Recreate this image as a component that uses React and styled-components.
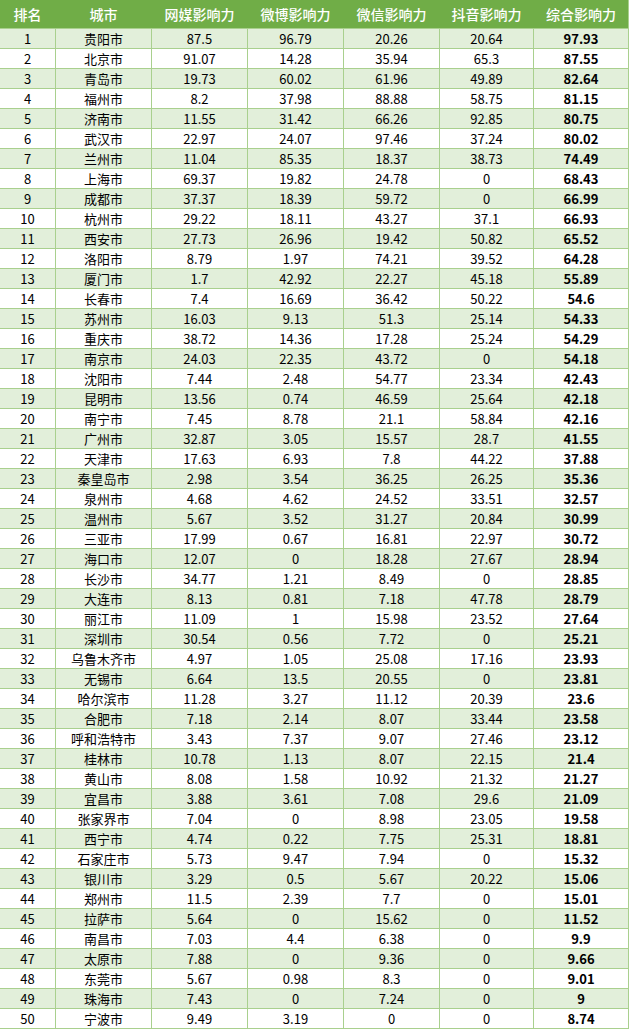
import React from 'react'
import styled, { createGlobalStyle } from 'styled-components';

const raw = `1 贵阳市 87.5 96.79 20.26 20.64 97.93
2 北京市 91.07 14.28 35.94 65.3 87.55
3 青岛市 19.73 60.02 61.96 49.89 82.64
4 福州市 8.2 37.98 88.88 58.75 81.15
5 济南市 11.55 31.42 66.26 92.85 80.75
6 武汉市 22.97 24.07 97.46 37.24 80.02
7 兰州市 11.04 85.35 18.37 38.73 74.49
8 上海市 69.37 19.82 24.78 0 68.43
9 成都市 37.37 18.39 59.72 0 66.99
10 杭州市 29.22 18.11 43.27 37.1 66.93
11 西安市 27.73 26.96 19.42 50.82 65.52
12 洛阳市 8.79 1.97 74.21 39.52 64.28
13 厦门市 1.7 42.92 22.27 45.18 55.89
14 长春市 7.4 16.69 36.42 50.22 54.6
15 苏州市 16.03 9.13 51.3 25.14 54.33
16 重庆市 38.72 14.36 17.28 25.24 54.29
17 南京市 24.03 22.35 43.72 0 54.18
18 沈阳市 7.44 2.48 54.77 23.34 42.43
19 昆明市 13.56 0.74 46.59 25.64 42.18
20 南宁市 7.45 8.78 21.1 58.84 42.16
21 广州市 32.87 3.05 15.57 28.7 41.55
22 天津市 17.63 6.93 7.8 44.22 37.88
23 秦皇岛市 2.98 3.54 36.25 26.25 35.36
24 泉州市 4.68 4.62 24.52 33.51 32.57
25 温州市 5.67 3.52 31.27 20.84 30.99
26 三亚市 17.99 0.67 16.81 22.97 30.72
27 海口市 12.07 0 18.28 27.67 28.94
28 长沙市 34.77 1.21 8.49 0 28.85
29 大连市 8.13 0.81 7.18 47.78 28.79
30 丽江市 11.09 1 15.98 23.52 27.64
31 深圳市 30.54 0.56 7.72 0 25.21
32 乌鲁木齐市 4.97 1.05 25.08 17.16 23.93
33 无锡市 6.64 13.5 20.55 0 23.81
34 哈尔滨市 11.28 3.27 11.12 20.39 23.6
35 合肥市 7.18 2.14 8.07 33.44 23.58
36 呼和浩特市 3.43 7.37 9.07 27.46 23.12
37 桂林市 10.78 1.13 8.07 22.15 21.4
38 黄山市 8.08 1.58 10.92 21.32 21.27
39 宜昌市 3.88 3.61 7.08 29.6 21.09
40 张家界市 7.04 0 8.98 23.05 19.58
41 西宁市 4.74 0.22 7.75 25.31 18.81
42 石家庄市 5.73 9.47 7.94 0 15.32
43 银川市 3.29 0.5 5.67 20.22 15.06
44 郑州市 11.5 2.39 7.7 0 15.01
45 拉萨市 5.64 0 15.62 0 11.52
46 南昌市 7.03 4.4 6.38 0 9.9
47 太原市 7.88 0 9.36 0 9.66
48 东莞市 5.67 0.98 8.3 0 9.01
49 珠海市 7.43 0 7.24 0 9
50 宁波市 9.49 3.19 0 0 8.74`;

const rows = raw.split('\n').map(line => line.trim().split(' '));

const headers = ['排名', '城市', '网媒影响力', '微博影响力', '微信影响力', '抖音影响力', '综合影响力'];

const GlobalStyle = createGlobalStyle`
    body{
        margin: 0;
        background: #fff;
        font-family: "Noto Sans CJK SC", "Liberation Sans", sans-serif;
    }
`;

const Sheet = styled.div`
    width: 628px;
    display: flex;
    flex-direction: column;
    gap: 1px;
    background: #a9d08e;
    padding: 0 1px 1px 0;
`;

const HeadRow = styled.div`
    display: grid;
    grid-template-columns: 55px 95px 95px 95px 95px 93px 94px;
    column-gap: 1px;
    height: 28px;
    background: #70ad47;
`;

const HeadCell = styled.div`
    color: #fff;
    font-size: 14px;
    font-weight: 500;
    line-height: 28px;
    text-align: center;
    white-space: nowrap;
`;

const Row = styled.div`
    display: grid;
    grid-template-columns: 55px 95px 95px 95px 95px 93px 94px;
    column-gap: 1px;
    height: 19px;
`;

const Cell = styled.div`
    background: ${p => (p.$odd ? '#e2efda' : '#fff')};
    color: #000;
    font-size: 13px;
    font-weight: ${p => (p.$bold ? 700 : 400)};
    line-height: 19px;
    text-align: center;
    white-space: nowrap;
`;

function App() {
    return (
        <>
        <GlobalStyle />
        <Sheet>
            <HeadRow>
                {headers.map(h => <HeadCell key={h}>{h}</HeadCell>)}
            </HeadRow>
            {rows.map((r, i) => (
                <Row key={r[0]}>
                    {r.map((v, j) => (
                        <Cell key={j} $odd={i % 2 === 0} $bold={j === 6}>{v}</Cell>
                    ))}
                </Row>
            ))}
        </Sheet>
        </>
    )
}

export default App;
